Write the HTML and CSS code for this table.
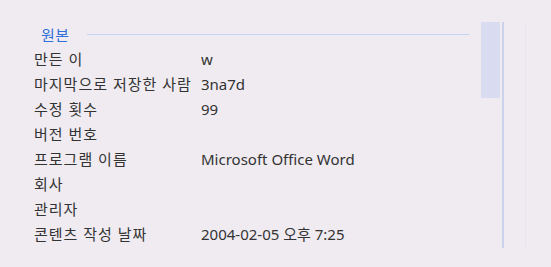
FILE: index.html
```html
<!DOCTYPE html>
<html lang="ko">
<head>
<meta charset="utf-8">
<link rel="stylesheet" href="styles.css">
</head>
<body>
<div class="page">
  <div class="content">
    <div class="section-head">
      <span class="section-title">원본</span>
      <span class="section-rule"></span>
    </div>
    <div class="props">
      <div class="label">만든 이</div><div class="value">w</div>
      <div class="label">마지막으로 저장한 사람</div><div class="value">3na7d</div>
      <div class="label">수정 횟수</div><div class="value">99</div>
      <div class="label">버전 번호</div><div class="value"></div>
      <div class="label">프로그램 이름</div><div class="value">Microsoft Office Word</div>
      <div class="label">회사</div><div class="value"></div>
      <div class="label">관리자</div><div class="value"></div>
      <div class="label">콘텐츠 작성 날짜</div><div class="value">2004-02-05 오후 7:25</div>
    </div>
  </div>
  <div class="scroll"><div class="thumb"></div></div>
  <div class="divider"></div>
  <div class="faint"></div>
</div>
</body>
</html>
```
FILE: styles.css
```css
html, body {
  margin: 0;
  padding: 0;
  background: #efebf1;
}
body {
  font-family: "Noto Sans", "Noto Sans CJK KR", sans-serif;
  font-size: 15px;
  color: #333;
}
.page {
  display: flex;
  align-items: flex-start;
  padding-top: 22px;
}
.content {
  width: 435px;
  padding-left: 34px;
}
.section-head {
  display: flex;
  align-items: center;
  height: 25px;
  padding-left: 7px;
}
.section-title {
  color: #2f6fd8;
  letter-spacing: 0.5px;
}
.section-rule {
  flex: 1;
  height: 1px;
  background: #c3d4f3;
  margin-left: 17px;
}
.props {
  display: grid;
  grid-template-columns: 167px 1fr;
  grid-auto-rows: 25px;
  align-items: center;
}
.label, .value {
  line-height: 25px;
  white-space: nowrap;
}
.label {
  letter-spacing: 1px;
}
.scroll {
  margin-left: 12px;
  width: 19px;
  height: 226px;
}
.thumb {
  height: 76px;
  background: #d9dcf0;
}
.divider {
  margin-left: 2px;
  width: 2px;
  height: 226px;
  background: #cbd2ec;
}
.faint {
  margin-left: 21px;
  width: 1px;
  height: 226px;
  background: #e6e4ef;
}
```
